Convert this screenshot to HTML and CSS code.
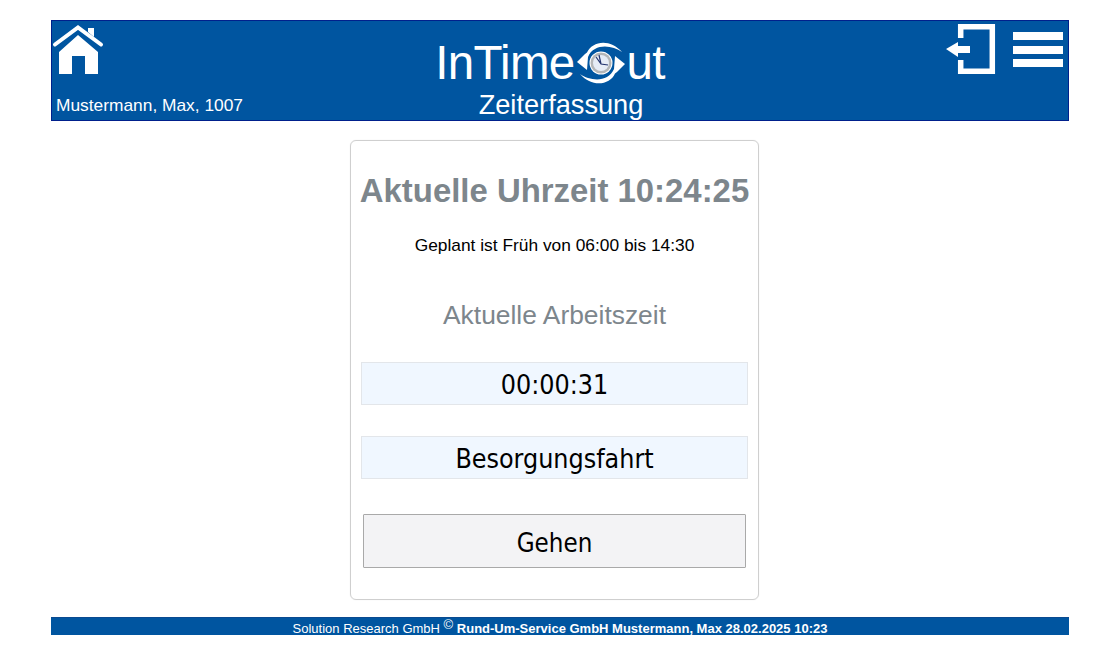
FILE: index.html
```html
<!DOCTYPE html>
<html lang="de">
<head>
<meta charset="utf-8">
<title>InTimeOut Zeiterfassung</title>
<link rel="stylesheet" href="styles.css">
</head>
<body>
<div class="page">
  <header class="topbar">
    <div class="left">
      <svg class="home" viewBox="0 0 52 50" aria-hidden="true">
        <path class="home-body" d="M26 11 L46 28 V50 H33 V32 H20 V50 H7 V28 Z"/>
        <path class="home-roof" d="M3 20.5 L26 3.5 L49 20.5"/>
        <path class="home-chim" d="M36 4 H42 V13 L36 8 Z"/>
      </svg>
      <div class="user">Mustermann, Max, 1007</div>
    </div>
    <div class="center">
      <div class="logo"><span>InTime</span><svg class="clock" viewBox="0 0 54 50" aria-hidden="true">
          <path class="swirl" d="M3 24 L11 16 L13 14.5 C18 3 36 0 48 14 C38 7 20 5 14 19 L13 32 Z"/>
          <path class="swirl" transform="rotate(180 27 25)" d="M3 24 L11 16 L13 14.5 C18 3 36 0 48 14 C38 7 20 5 14 19 L13 32 Z"/>
          <circle class="clock-halo" cx="27" cy="25" r="11.5"/>
          <circle class="clock-rim" cx="27" cy="25" r="10.5"/>
          <circle class="clock-face" cx="27" cy="25" r="8"/>
          <path class="clock-hands" d="M22 19 L27 26 L34 27 M25 17 L27 26"/>
        </svg><span>ut</span></div>
      <div class="sub">Zeiterfassung</div>
    </div>
    <div class="right">
      <svg class="logout" viewBox="0 0 50 51" aria-hidden="true">
        <path class="door" d="M14.7 14 V2.7 H46.3 V47.3 H14.7 V36"/>
        <path class="arrow" d="M0 25 L12 18 V22 H24 V29 H12 V33 Z"/>
      </svg>
      <div class="menu"><span></span><span></span><span></span></div>
    </div>
  </header>

  <main class="card">
    <h1 class="time">Aktuelle Uhrzeit 10:24:25</h1>
    <p class="plan">Geplant ist Früh von 06:00 bis 14:30</p>
    <h2 class="label">Aktuelle Arbeitszeit</h2>
    <div class="field field-first">00:00:31</div>
    <div class="field field-second">Besorgungsfahrt</div>
    <button class="action" type="button">Gehen</button>
  </main>

  <footer class="foot">Solution Research GmbH <sup class="copy">©</sup> <b>Rund-Um-Service GmbH Mustermann, Max 28.02.2025 10:23</b></footer>
</div>
</body>
</html>
```
FILE: styles.css
```css
* { box-sizing: border-box; }
html, body { margin: 0; padding: 0; background: #fff; }
body { font-family: "Liberation Sans", Arial, sans-serif; }
.page { padding: 20px 51px 0 51px; display: flex; flex-direction: column; align-items: stretch; }

.topbar {
  height: 101px;
  background: #0055a0;
  border: 1px solid #00208c;
  color: #fff;
  display: grid;
  grid-template-columns: 1fr auto 1fr;
}
.left { display: flex; flex-direction: column; justify-content: space-between; align-items: flex-start; padding: 3px 0 4px 0; }
.home { width: 52px; height: 50px; display: block; }
.home-body { fill: #fff; }
.home-roof { fill: none; stroke: #fff; stroke-width: 4; stroke-linecap: round; }
.home-chim { fill: #fff; }
.user { font-size: 17.35px; line-height: 22px; padding-left: 4px; }

.center { display: flex; flex-direction: column; align-items: center; padding-top: 17px; }
.logo { display: flex; align-items: center; font-size: 47.5px; line-height: 50px; height: 50px; letter-spacing: -0.7px; margin-right: 20px; }
.clock { width: 54px; height: 50px; margin: 0 -1px 0 -1px; }
.swirl { fill: #fff; }
.clock-halo { fill: #fff; }
.clock-rim { fill: #b4b6b8; }
.clock-face { fill: #e6ecf6; }
.clock-hands { fill: none; stroke: #23336e; stroke-width: 1.2; }
.sub { font-size: 27.2px; line-height: 30px; margin: 2px 0 0 2px; }

.right { display: flex; justify-content: flex-end; align-items: flex-start; gap: 17px; padding: 3px 5px 0 0; }
.logout { width: 50px; height: 51px; display: block; }
.door { fill: none; stroke: #fff; stroke-width: 5.5; }
.arrow { fill: #fff; }
.menu { width: 50px; display: flex; flex-direction: column; gap: 5.5px; padding-top: 8px; }
.menu span { display: block; height: 8px; background: #fff; }

.card {
  width: 409px;
  height: 460px;
  margin: 19px 0 0 299px;
  border: 1px solid #cfcfcf;
  border-radius: 6px;
  box-shadow: 0 0 1px #ddd;
  padding: 0 10px;
  display: flex;
  flex-direction: column;
  align-items: stretch;
  text-align: center;
}
.time { margin: 32px -8px 0; font-size: 32.9px; line-height: 36px; font-weight: 700; color: #7d868c; white-space: nowrap; }
.plan { margin: 26px 0 0; font-size: 17.35px; line-height: 20px; color: #000; }
.label { margin: 46px 0 0; font-size: 26.4px; line-height: 28px; font-weight: 400; color: #7d868c; }
.field {
  height: 43px;
  background: #f0f7ff;
  border: 1px solid #e3e6ea;
  font-family: "DejaVu Sans", sans-serif;
  font-stretch: condensed;
  font-size: 26.6px;
  line-height: 43px;
  color: #000;
}
.field-first { margin-top: 33px; }
.field-second { margin-top: 31px; }
.action {
  width: 383px;
  height: 54px;
  margin: 35px auto 0;
  background: #f3f3f5;
  border: 1px solid #a9a9a9;
  border-radius: 1px;
  font-family: "DejaVu Sans", sans-serif;
  font-stretch: condensed;
  font-size: 25.7px;
  color: #000;
  padding: 3px 0 0;
}

.foot {
  height: 18px;
  margin-top: 17px;
  background: #0055a0;
  border-top: 1px solid #0a4a90;
  color: #fff;
  text-align: center;
  font-size: 13px;
  line-height: 21px;
  white-space: nowrap;
  overflow: hidden;
}
.copy { font-size: 13px; line-height: 0; vertical-align: 4px; }
```
